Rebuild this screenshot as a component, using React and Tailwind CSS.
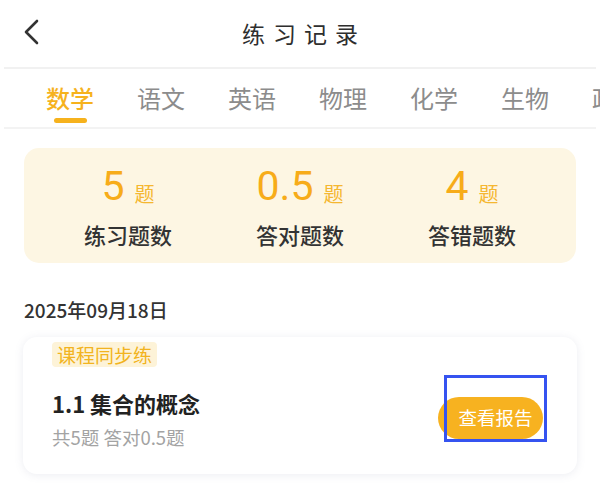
import React from 'react';

const tabs = ['数学', '语文', '英语', '物理', '化学', '生物', '政治'];

const stats = [
  { value: '5', label: '练习题数' },
  { value: '0.5', label: '答对题数' },
  { value: '4', label: '答错题数' },
];

const cjk = { fontFamily: '"Noto Sans CJK SC", "Noto Sans", sans-serif' };

const App = () => {
  return (
    <div className="w-[600px] h-[498px] bg-white overflow-hidden" style={cjk}>
      {/* Header */}
      <header className="relative h-[67px] flex items-center justify-center">
        <svg className="absolute left-[22px] top-[19px]" width="18" height="26" viewBox="0 0 18 26" fill="none">
          <path d="M15 2 L4 13 L15 24" stroke="#333" strokeWidth="2.6" strokeLinecap="round" strokeLinejoin="round" />
        </svg>
        <h1 className="text-[23px] font-normal text-[#2e2e2e] tracking-[8px] pl-[8px] leading-none">练习记录</h1>
      </header>
      <div className="mx-[4px] h-[2px] bg-[#f1f1f1]" />

      {/* Tabs */}
      <nav className="h-[58px] flex items-start gap-[43px] pl-[46px] whitespace-nowrap overflow-hidden">
        {tabs.map((t, i) => (
          <div key={t} className="relative flex flex-col items-center pt-[13px] shrink-0">
            <span className={`text-[24px] leading-[32px] ${i === 0 ? 'text-[#f6b21d] font-medium' : 'text-[#8c8c8c]'}`}>{t}</span>
            {i === 0 && <span className="mt-[4px] w-[33px] h-[5px] rounded-full bg-[#f6b21d]" />}
          </div>
        ))}
      </nav>
      <div className="mx-[4px] h-[2px] bg-[#f3f3f3]" />

      {/* Stats */}
      <section className="mx-[24px] mt-[19px] h-[115px] rounded-[15px] bg-[#fdf6e3] grid grid-cols-3 px-[18px]">
        {stats.map((s) => (
          <div key={s.label} className="flex flex-col items-center pt-[17px]">
            <div className="flex items-end gap-[10px] text-[#f7ac19]">
              <span className="text-[41px] leading-[42px]" style={{ fontFamily: 'Roboto, "Liberation Sans", sans-serif' }}>{s.value}</span>
              <span className="text-[20px] leading-[20px] mb-[3px] text-[#f5b731]">题</span>
            </div>
            <span className="mt-[14px] text-[22px] leading-[26px] font-medium text-[#333]">{s.label}</span>
          </div>
        ))}
      </section>

      {/* Date */}
      <div className="mt-[36px] pl-[24px] text-[19px] leading-[22px] font-medium text-[#333]">2025年09月18日</div>

      {/* Record card */}
      <div className="relative mx-[23px] mt-[16px] h-[137px] rounded-[14px] bg-white shadow-[0_1px_8px_rgba(120,130,160,0.14)] flex items-start justify-between pl-[29px] pr-[34px]">
        <div className="flex flex-col items-start pt-[5px]">
          <span className="px-[5px] h-[25px] flex items-center rounded-[4px] bg-[#fdf3d8] text-[#f2b320] text-[19px] leading-none">课程同步练</span>
          <span className="mt-[23px] text-[22px] leading-[26px] font-semibold text-[#222]">1.1 集合的概念</span>
          <span className="mt-[11px] text-[18.5px] leading-[20px] text-[#a3a3a3]">共5题 答对0.5题</span>
        </div>
        <button className="mt-[60px] w-[105px] h-[42px] rounded-full bg-[#f7b220] text-white text-[18.5px] flex items-center justify-center pl-[10px]">
          查看报告
        </button>
        {/* annotation box */}
        <div className="absolute left-[421px] top-[38px] w-[103px] h-[67px] border-[3px] border-[#3553f0]" />
      </div>
    </div>
  );
};

export default App;
